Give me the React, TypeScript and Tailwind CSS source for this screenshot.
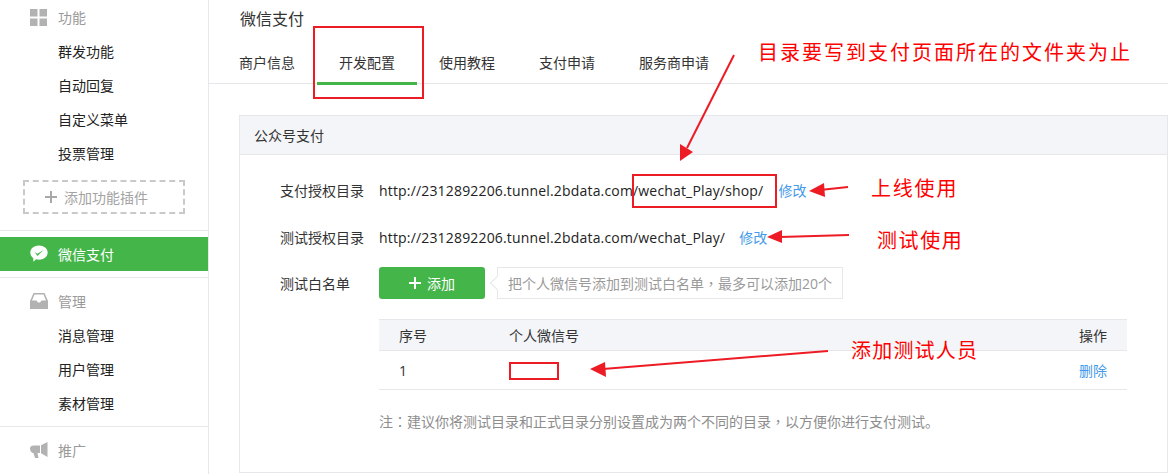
const FONT = "font-['Open_Sans','Noto_Sans_CJK_SC',sans-serif]";

// centred full-width punctuation, as in the reference
const Punct = ({ children }: { children: string }) => (
  <span className="font-['Noto_Sans_CJK_TC',sans-serif]">{children}</span>
);

const SideGroup = ({ icon, title, items }: { icon: React.ReactNode; title: string; items?: string[] }) => (
  <div>
    <div className="flex h-[34px] items-center pl-[30px] text-[14px] text-[#9a9a9a]">
      <span className="flex w-[28px] items-center">{icon}</span>
      {title}
    </div>
    {items?.map((item) => (
      <div key={item} className="flex h-[34px] items-center pl-[58px] text-[14px] text-[#222]">
        {item}
      </div>
    ))}
  </div>
);

const GridIcon = () => (
  <svg width="17" height="17" viewBox="0 0 17 17" fill="#b2b2b2">
    <rect x="0" y="0" width="7.5" height="7.5" />
    <rect x="9.5" y="0" width="7.5" height="7.5" />
    <rect x="0" y="9.5" width="7.5" height="7.5" />
    <rect x="9.5" y="9.5" width="7.5" height="7.5" />
  </svg>
);

const TrayIcon = () => (
  <svg width="18" height="16" viewBox="0 0 18 16" fill="#b2b2b2">
    <path d="M3.5 0h11L18 8v8H0V8zM4.5 1.5 2 7.5h4.5L8 9.5h2l1.5-2H16l-2.500-6z" fillRule="evenodd" />
  </svg>
);

const MegaphoneIcon = () => (
  <svg width="18" height="17" viewBox="0 0 18 17" fill="#b2b2b2">
    <path d="M0 6.500C0 4.500 1.500 3.500 3.500 3.500H10V11H7.500L8.500 16H5L3.500 11C1.500 11 0 9 0 6.500Z" />
    <path d="M11 3.300 17.500 0V15L11 11.200Z" />
  </svg>
);

const WechatIcon = () => (
  <svg width="18" height="18" viewBox="0 0 18 18">
    <path d="M9 0.500C13.800 0.500 17.700 3.600 17.700 7.600S13.800 14.700 9 14.700C8 14.700 7 14.600 6.100 14.300L3.400 16.800L3.300 13.200C1.400 11.900 0.300 9.900 0.300 7.600C0.300 3.600 4.200 0.500 9 0.500Z" fill="#fff" />
    <path d="M4.800 7 7.400 8.800 13.600 5 7.400 11Z" fill="#44b549" />
  </svg>
);

const Row = ({ label, children }: { label: string; children: React.ReactNode }) => (
  <div className="flex h-8 items-center pl-10">
    <span className="w-[99px] text-[#333]">{label}</span>
    {children}
  </div>
);

const tabs = ["商户信息", "开发配置", "使用教程", "支付申请", "服务商申请"];

export default function App() {
  return (
    <div className={`relative flex h-[474px] w-[1168px] overflow-hidden bg-white text-[14px] ${FONT}`}>
      {/* sidebar */}
      <aside className="h-full w-[209px] shrink-0 border-r border-[#e7e7eb]">
        <SideGroup icon={<GridIcon />} title="功能" items={["群发功能", "自动回复", "自定义菜单", "投票管理"]} />
        <div className="mt-[10px] ml-[23px] flex h-[34px] w-[162px] items-center border-2 border-dashed border-[#c9c9c9] pl-[20px] text-[#a3a3a3]">
          <svg width="12" height="12" viewBox="0 0 12 12" className="mr-[7px]" fill="#a8a8a8">
            <rect x="5" y="0" width="2" height="12" />
            <rect x="0" y="5" width="12" height="2" />
          </svg>
          添加功能插件
        </div>
        <div className="mt-4 h-px bg-[#e7e7eb]" />
        <div className="mt-[6px] flex h-[34px] items-center bg-[#44b549] pl-[30px] text-white">
          <span className="flex w-[28px] items-center">
            <WechatIcon />
          </span>
          微信支付
        </div>
        <div className="mt-[6px] h-px bg-[#e7e7eb]" />
        <div className="mt-[6px]">
          <SideGroup icon={<TrayIcon />} title="管理" items={["消息管理", "用户管理", "素材管理"]} />
        </div>
        <div className="mt-[6px] h-px bg-[#e7e7eb]" />
        <div className="mt-[6px]">
          <SideGroup icon={<MegaphoneIcon />} title="推广" />
        </div>
      </aside>

      {/* main */}
      <main className="min-w-0 flex-1">
        <div className="pl-[31px] pt-[7px] text-[16px] leading-6 text-[#333]">微信支付</div>
        <div className="mt-[19px] flex h-[34px] border-b border-[#e7e7eb] pl-[8px] text-[#333]">
          {tabs.map((tab, i) => (
            <div
              key={tab}
              className={
                i === 1
                  ? "h-[35px] w-[100px] border-b-[3px] border-[#44b549] pt-[2px] pl-[22px]"
                  : "h-[34px] w-[100px] pt-[2px] pl-[22px] whitespace-nowrap"
              }
            >
              {tab}
            </div>
          ))}
        </div>

        {/* card */}
        <section className="mt-[31px] ml-[30px] h-[358px] border border-[#e7e7eb]">
          <div className="flex h-[39px] items-center border-b border-[#e7e7eb] bg-[#f4f5f9] pl-[14px] text-[#333]">
            公众号支付
          </div>
          <div className="pt-[19px]">
            <Row label="支付授权目录">
              <span className="tracking-[0.17px] text-[#222]">http://2312892206.tunnel.2bdata.com/wechat_Play/shop/</span>
              <a className="ml-[15px] text-[#459ae9]">修改</a>
            </Row>
            <div className="mt-[15px]">
              <Row label="测试授权目录">
                <span className="tracking-[0.17px] text-[#222]">http://2312892206.tunnel.2bdata.com/wechat_Play/</span>
                <a className="ml-[14px] text-[#459ae9]">修改</a>
              </Row>
            </div>
            <div className="mt-[14px]">
              <Row label="测试白名单">
                <button className="flex h-8 w-[106px] items-center justify-center rounded-[3px] bg-[#44b549] text-white">
                  <svg width="12" height="12" viewBox="0 0 12 12" className="mr-[6px]" fill="#fff">
                    <rect x="5" y="0" width="2" height="12" />
                    <rect x="0" y="5" width="12" height="2" />
                  </svg>
                  添加
                </button>
                <div className="relative ml-3 flex h-8 w-[346px] items-center border border-[#e7e7eb] pl-[10px] text-[#9a9a9a]">
                  <span>
                    把个人微信号添加到测试白名单<Punct>，</Punct>最多可以添加20个
                  </span>
                  <span className="absolute top-[10px] -left-[6px] h-[10px] w-[10px] rotate-45 border-b border-l border-[#e7e7eb] bg-white" />
                </div>
              </Row>
            </div>

            {/* table */}
            <div className="mt-5 ml-[139px] w-[748px]">
              <div className="flex h-[32px] items-center border-y border-[#e7e7eb] bg-[#f4f5f9] px-5 text-[#333]">
                <span className="w-[110px]">序号</span>
                <span className="flex-1">个人微信号</span>
                <span>操作</span>
              </div>
              <div className="flex h-[39px] items-center border-b border-[#e7e7eb] px-5 text-[#333]">
                <span className="w-[110px]">1</span>
                <span className="flex-1" />
                <a className="text-[#459ae9]">删除</a>
              </div>
            </div>

            <p className="mt-[21px] ml-[139px] text-[#8d8d8d]">
              注<Punct>：</Punct>建议你将测试目录和正式目录分别设置成为两个不同的目录<Punct>，</Punct>以方便你进行支付测试。
            </p>
          </div>
        </section>
      </main>

      {/* red annotations over the screenshot */}
      <div className="absolute top-[26px] left-[313px] h-[73px] w-[111px] border-2 border-[#ed1c24]" />
      <div className="absolute top-[174px] left-[632px] h-[34px] w-[145px] border-2 border-[#ed1c24]" />
      <div className="absolute top-[362px] left-[509px] h-[18px] w-[50px] border-2 border-[#ed1c24]" />

      <svg className="pointer-events-none absolute inset-0" width="1168" height="474" viewBox="0 0 1168 474">
        <g stroke="#ed1c24" strokeWidth="2" fill="#ed1c24">
          <line x1="734" y1="55" x2="687" y2="148" />
          <line x1="848" y1="187" x2="820" y2="190" />
          <line x1="849" y1="235" x2="780" y2="237" />
          <line x1="828" y1="351" x2="603" y2="369" />
        </g>
        <g fill="#ed1c24">
          <polygon points="680,161 680,144 693,152" />
          <polygon points="809,191 824,183 825,197" />
          <polygon points="767,237 782,230 782,243" />
          <polygon points="590,369 605,362 606,377" />
        </g>
      </svg>

      <span className="absolute top-[38px] left-[758px] text-[20px] leading-[30px] tracking-[2px] whitespace-nowrap text-[#f00]">
        目录要写到支付页面所在的文件夹为止
      </span>
      <span className="absolute top-[174px] left-[871px] text-[20px] leading-[30px] tracking-[1.8px] whitespace-nowrap text-[#f00]">
        上线使用
      </span>
      <span className="absolute top-[226px] left-[877px] text-[20px] leading-[30px] tracking-[1.6px] whitespace-nowrap text-[#f00]">
        测试使用
      </span>
      <span className="absolute top-[336px] left-[851px] text-[20px] leading-[30px] tracking-[1.2px] whitespace-nowrap text-[#f00]">
        添加测试人员
      </span>
    </div>
  );
}
